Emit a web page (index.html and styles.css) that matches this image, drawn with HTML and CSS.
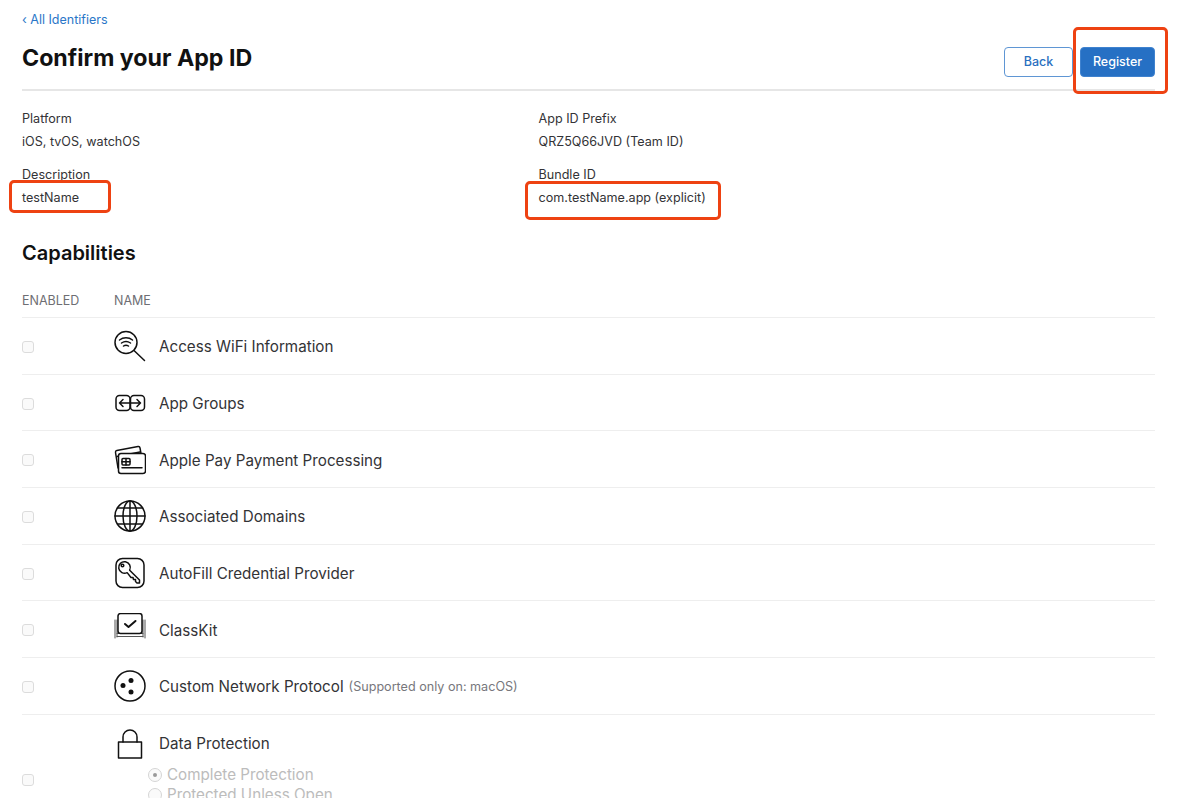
FILE: index.html
```html
<!DOCTYPE html>
<html lang="en">
<head>
<meta charset="utf-8">
<title>Confirm your App ID</title>
<link rel="stylesheet" href="styles.css">
</head>
<body>
<main class="page">
  <a class="back-link" href="#">‹ All Identifiers</a>
  <header class="head">
    <h1>Confirm your App ID</h1>
    <div class="actions">
      <button class="btn btn-outline">Back</button>
      <button class="btn btn-primary">Register</button>
    </div>
  </header>
  <section class="details">
    <div class="field"><div>Platform</div><div>iOS, tvOS, watchOS</div></div>
    <div class="field"><div>App ID Prefix</div><div>QRZ5Q66JVD (Team ID)</div></div>
    <div class="field"><div>Description</div><div>testName</div></div>
    <div class="field"><div>Bundle ID</div><div>com.testName.app (explicit)</div></div>
  </section>
  <h2>Capabilities</h2>
  <div class="cols"><span class="col-en">ENABLED</span><span>NAME</span></div>

  <div class="row">
    <span class="check"></span>
    <svg class="icon" viewBox="0 0 32 32"><circle cx="12" cy="12.500" r="11"/><path d="M20 20.500l10.500 10M5.500 10c3.800-3 9.200-3 13 0M7.500 13c2.800-2 6.200-2 9 0M9.500 16c1.500-1 3.500-1 5 0"/></svg>
    <span class="name">Access WiFi Information</span>
  </div>
  <div class="row">
    <span class="check"></span>
    <svg class="icon" viewBox="0 0 32 32"><rect x="2" y="8.500" width="14" height="15" rx="3.500"/><rect x="16.500" y="8.500" width="14" height="15" rx="3.500"/><path d="M5.500 16h21M9 12.500L5.500 16 9 19.500M23 12.500l3.500 3.500-3.500 3.500"/></svg>
    <span class="name">App Groups</span>
  </div>
  <div class="row">
    <span class="check"></span>
    <svg class="icon" viewBox="0 0 32 32"><path d="M4 25L1.500 9.500c-.2-1 .3-1.700 1.300-1.900L24 3.500c1-.2 1.800.3 2 1.300l.9 5.200"/><path d="M3 13.500L26 9"/><rect x="4.500" y="10.500" width="27" height="20" rx="2.500" class="fill"/><rect x="8" y="15.500" width="8" height="6.500" rx="1"/><path d="M12 15.500V22M8 18.700h8M8 24.800h20"/></svg>
    <span class="name">Apple Pay Payment Processing</span>
  </div>
  <div class="row">
    <span class="check"></span>
    <svg class="icon" viewBox="0 0 32 32"><circle cx="16" cy="16" r="15"/><ellipse cx="16" cy="16" rx="7" ry="15"/><path d="M16 1v30M1 16h30M3.500 8h25M3.500 24h25"/></svg>
    <span class="name">Associated Domains</span>
  </div>
  <div class="row">
    <span class="check"></span>
    <svg class="icon" viewBox="0 0 32 32"><rect x="2" y="1.500" width="28" height="29" rx="6.500"/><path d="M15.650 13.170L25.500 23v3H23l-1.500-1.500v-2h-2l-.5-2h-2l-3.830-4.850A5.800 5.800 0 1 1 15.650 13.170z"/><circle cx="8.500" cy="8.500" r="1.300"/></svg>
    <span class="name">AutoFill Credential Provider</span>
  </div>
  <div class="row">
    <span class="check"></span>
    <svg class="icon" viewBox="0 0 32 32"><path class="thin" d="M1 7v18M3 7v17M29 7v17M31 7v18M3 20.500h26M3 23.500h26"/><rect class="fill" x="4" y="0.500" width="24" height="20" rx="2.500"/><path class="bold" d="M11 11l3.500 3L21.500 8"/></svg>
    <span class="name">ClassKit</span>
  </div>
  <div class="row">
    <span class="check"></span>
    <svg class="icon" viewBox="0 0 32 32"><circle cx="16" cy="16" r="15"/><circle class="dot" cx="17" cy="10.500" r="2.500"/><circle class="dot" cx="9" cy="15.500" r="2.500"/><circle class="dot" cx="17" cy="22" r="2.500"/></svg>
    <span class="name">Custom Network Protocol</span>
    <span class="note">(Supported only on: macOS)</span>
  </div>
  <div class="row row-tall">
    <span class="check check-tall"></span>
    <div class="tall-body">
      <div class="tall-head">
        <svg class="icon" viewBox="0 0 32 32"><rect x="4.500" y="14" width="23" height="16"/><path d="M9 14V9a7 7 0 0 1 14 0v5"/></svg>
        <span class="name name-tall">Data Protection</span>
      </div>
      <div class="radios">
        <div class="radio-line"><span class="radio on"></span>Complete Protection</div>
        <div class="radio-line"><span class="radio"></span>Protected Unless Open</div>
      </div>
    </div>
  </div>
</main>
<div class="mark mark-desc"></div>
<div class="mark mark-bundle"></div>
<div class="mark mark-reg"></div>
</body>
</html>
```
FILE: styles.css
```css
* { box-sizing: border-box; }
html, body { margin: 0; height: 798px; overflow: hidden; background: #fff; }
body { font-family: Inter, "Liberation Sans", sans-serif; color: #1d1d1f; position: relative; }
.page { width: 1133px; margin-left: 22px; padding-top: 12px; }
.back-link { display: block; font-size: 12.500px; line-height: 15px; color: #2a76c8; text-decoration: none; }
.head { display: flex; justify-content: space-between; align-items: flex-start; height: 63px; border-bottom: 2px solid #e6e6e6; margin-top: 1px; }
h1 { margin: 14px 0 0; font-size: 23.200px; line-height: 32px; font-weight: 700; color: #111; }
.actions { display: flex; gap: 7px; margin-top: 18.500px; }
.btn { height: 30px; border-radius: 4px; font: 500 12.500px Inter, sans-serif; padding: 0; }
.btn-outline { width: 69px; background: #fff; color: #2a6fc0; border: 1px solid #5f96d4; }
.btn-primary { width: 75px; background: #2670c4; color: #fff; border: 1px solid #3f82cf; }
.details { display: grid; grid-template-columns: 516.500px 1fr; row-gap: 9.700px; margin-top: 16px; font-size: 12.600px; line-height: 23px; color: #333336; }
h2 { margin: 31.300px 0 0; font-size: 20px; line-height: 26px; font-weight: 600; color: #111; }
.cols { display: flex; margin-top: 27px; height: 25px; font-size: 12.500px; line-height: 16px; color: #6e6e73; border-bottom: 1px solid #eee; }
.col-en { width: 92px; }
.row { display: flex; align-items: center; height: 56.700px; border-bottom: 1px solid #eee; }
.check { width: 12px; height: 12px; border: 1px solid #dcdcdc; border-radius: 3px; background: #fafafa; margin: 2px 80px 0 0; flex: none; }
.icon { width: 32px; height: 32px; flex: none; fill: none; stroke: #111; stroke-width: 1.500; stroke-linecap: round; stroke-linejoin: round; }
.icon .fill { fill: #fff; }
.icon .dot { fill: #111; stroke: none; }
.icon .thin { stroke: #555; stroke-width: 1; }
.icon .bold { stroke-width: 2; }
.name { margin: 2px 0 0 13px; font-size: 15.200px; color: #333336; }
.name-tall { margin-top: 0; }
.note { margin: 2px 0 0 5px; font-size: 12.600px; color: #77777c; }
.row-tall { height: 120px; align-items: flex-start; border-bottom: 0; position: relative; }
.check-tall { margin-top: 59px; }
.tall-body { padding-top: 13px; }
.tall-head { display: flex; align-items: center; }
.radios { margin: 5px 0 0 34px; font-size: 15.200px; line-height: 20px; color: #bcbcbc; }
.radio-line { display: flex; align-items: center; gap: 5px; }
.radio { width: 14px; height: 14px; border: 1px solid #d5d5d5; border-radius: 50%; position: relative; background: #fafafa; }
.radio.on::after { content: ""; position: absolute; left: 4px; top: 4px; width: 4px; height: 4px; border-radius: 50%; background: #9a9a9a; }
.mark { position: absolute; border: 3px solid #ee4212; border-radius: 5px; }
.mark-desc { left: 9px; top: 180px; width: 102px; height: 33px; }
.mark-bundle { left: 525px; top: 181px; width: 196px; height: 39px; }
.mark-reg { left: 1073px; top: 27px; width: 95px; height: 67px; }
```
